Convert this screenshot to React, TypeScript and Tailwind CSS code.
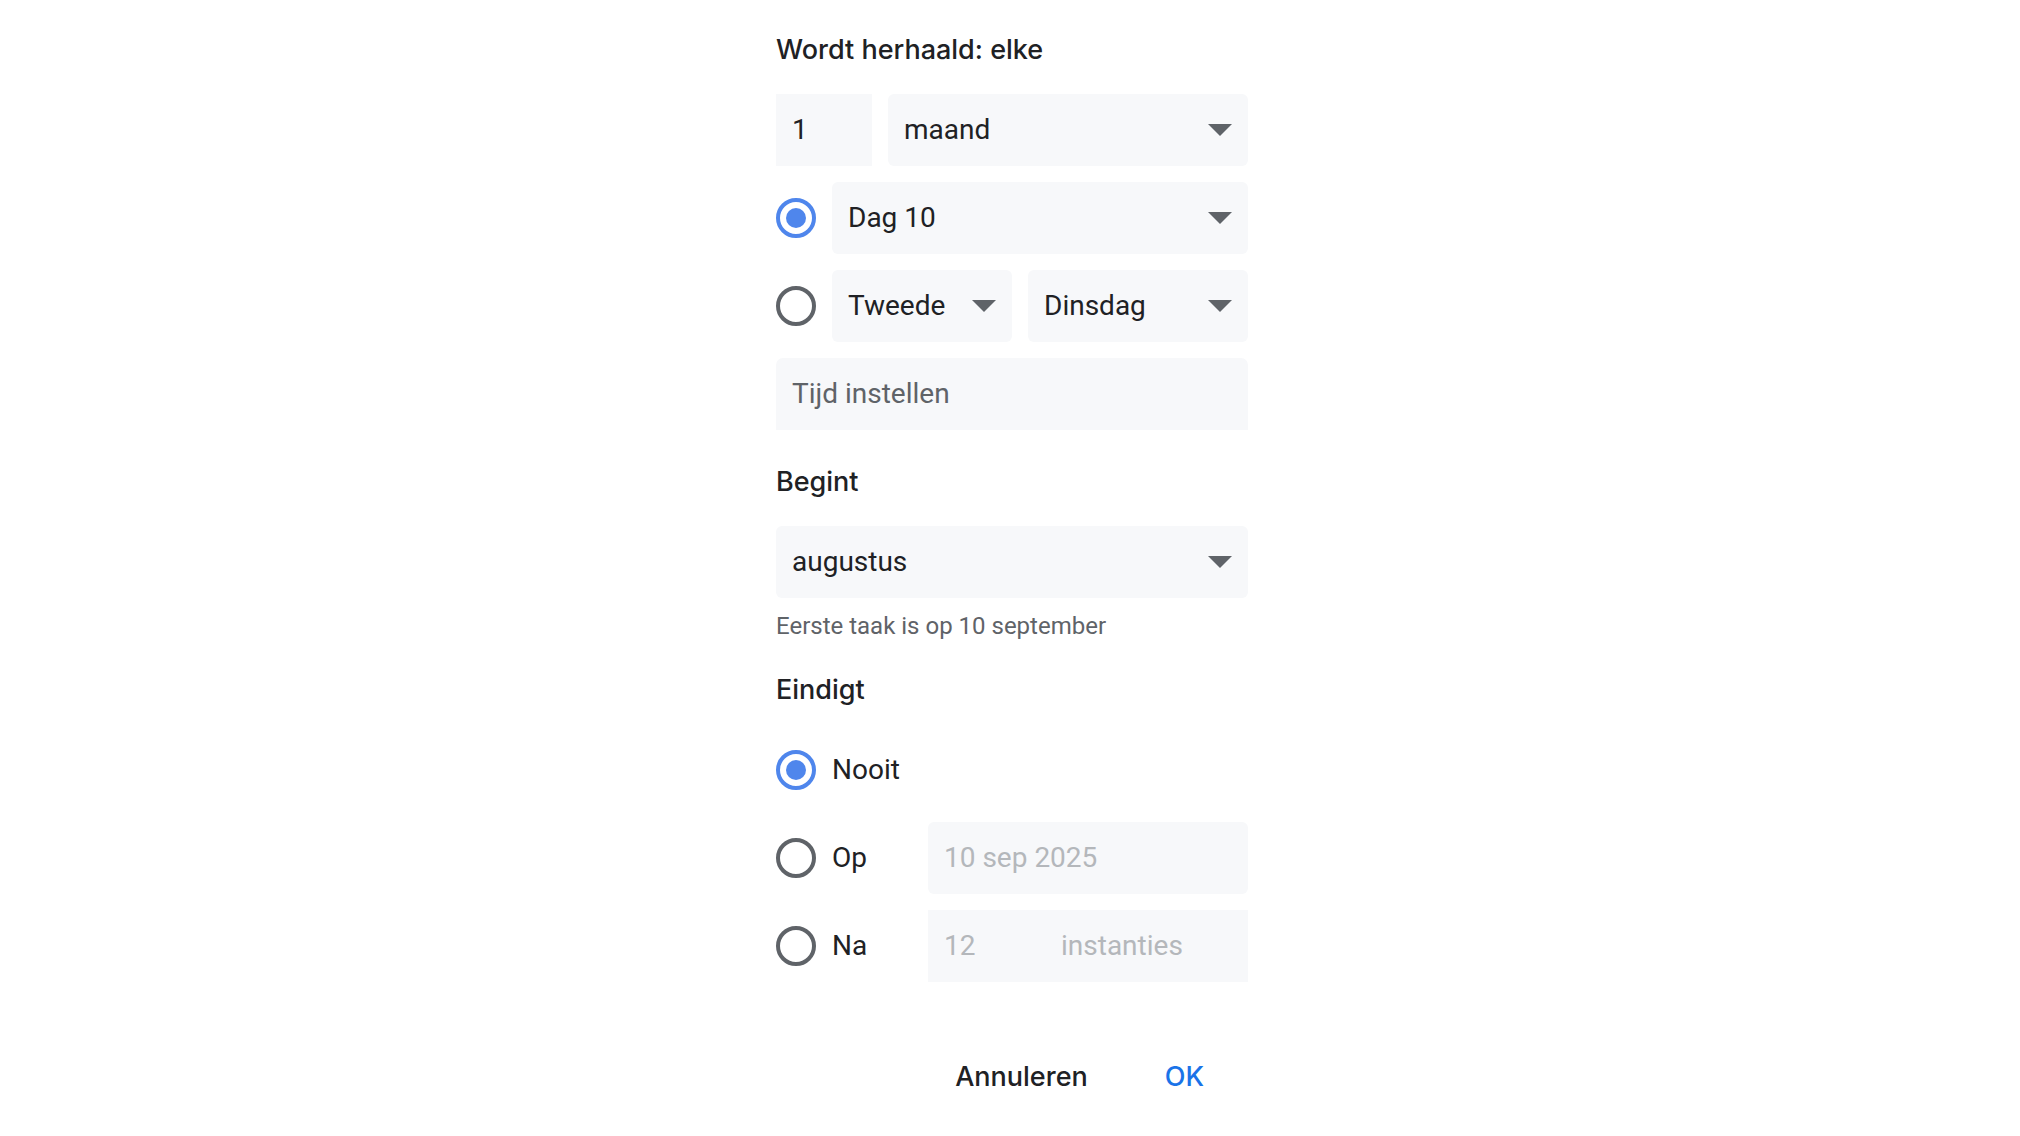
import type { ReactNode } from "react";

function Caret() {
  return (
    <svg width="24" height="12" viewBox="0 0 24 12" className="shrink-0">
      <polygon points="0,0 24,0 12,12" fill="#5f6368" />
    </svg>
  );
}

function Radio({ checked }: { checked?: boolean }) {
  if (checked) {
    return (
      <div className="flex h-10 w-10 shrink-0 items-center justify-center rounded-full border-[4px] border-[#4f86ec]">
        <div className="h-5 w-5 rounded-full bg-[#4f86ec]" />
      </div>
    );
  }
  return <div className="h-10 w-10 shrink-0 rounded-full border-[4px] border-[#5f6368]" />;
}

function Select({ label, className = "" }: { label: string; className?: string }) {
  return (
    <div
      className={`flex h-[72px] items-center justify-between rounded-[6px] bg-[#f7f8fa] pl-4 pr-4 text-[28px] text-[#202124] ${className}`}
    >
      <span>{label}</span>
      <Caret />
    </div>
  );
}

function Heading({ children }: { children: ReactNode }) {
  return (
    <h2 className="font-['Inter',sans-serif] text-[27px] leading-9 font-medium text-[#202124]">
      {children}
    </h2>
  );
}

export default function App() {
  return (
    <div
      className="flex min-h-[1136px] justify-center bg-white pl-1"
      style={{ fontFamily: "Roboto, 'Liberation Sans', sans-serif" }}
    >
      <div className="flex w-[472px] flex-col pt-[32px]">
        <Heading>Wordt herhaald: elke</Heading>

        <div className="mt-[26px] flex gap-4">
          <div className="flex h-[72px] w-[96px] items-center bg-[#f7f8fa] px-4 text-[28px] text-[#202124]">
            1
          </div>
          <Select label="maand" className="flex-1" />
        </div>

        <div className="mt-4 flex items-center gap-4">
          <Radio checked />
          <Select label="Dag 10" className="flex-1" />
        </div>

        <div className="mt-4 flex items-center gap-4">
          <Radio />
          <Select label="Tweede" className="w-[180px]" />
          <Select label="Dinsdag" className="flex-1" />
        </div>

        <div className="mt-4 flex h-[72px] items-center rounded-t-[7px] bg-[#f7f8fa] px-4 text-[28px] text-[#5f6368]">
          Tijd instellen
        </div>

        <div className="mt-[34px]">
          <Heading>Begint</Heading>
        </div>

        <Select label="augustus" className="mt-[26px]" />

        <p className="mt-3 text-[24px] leading-8 text-[#5f6368]">Eerste taak is op 10 september</p>

        <div className="mt-[30px]">
          <Heading>Eindigt</Heading>
        </div>

        <div className="mt-[26px] flex h-[72px] items-center gap-4">
          <Radio checked />
          <span className="text-[28px] text-[#202124]">Nooit</span>
        </div>

        <div className="mt-4 flex h-[72px] items-center">
          <div className="flex w-[152px] items-center gap-4">
            <Radio />
            <span className="text-[28px] text-[#202124]">Op</span>
          </div>
          <div className="flex h-[72px] flex-1 items-center rounded-[6px] bg-[#f7f8fa] px-4 text-[28px] text-[#b4b7bb]">
            10 sep 2025
          </div>
        </div>

        <div className="mt-4 flex h-[72px] items-center">
          <div className="flex w-[152px] items-center gap-4">
            <Radio />
            <span className="text-[28px] text-[#202124]">Na</span>
          </div>
          <div className="flex h-[72px] flex-1 items-center bg-[#f7f8fa] px-4 text-[28px] text-[#b4b7bb]">
            <span className="w-[117px]">12</span>
            <span>instanties</span>
          </div>
        </div>

        <div className="mt-[77px] flex justify-end gap-[77px] pr-[44px] font-['Inter',sans-serif] text-[27px] leading-9 font-medium">
          <button className="text-[#202124]">Annuleren</button>
          <button className="text-[#1a73e8]">OK</button>
        </div>
      </div>
    </div>
  );
}
